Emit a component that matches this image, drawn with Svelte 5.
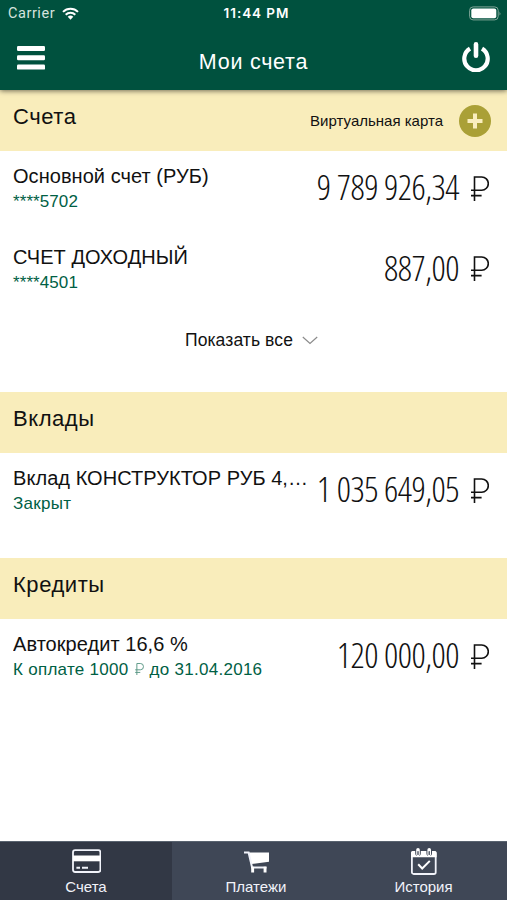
<script lang="ts">
	type Item = {
		title: string;
		note: string;
		due?: string;
		amount: string;
	};

	const accounts: Item[] = [
		{ title: 'Основной счет (РУБ)', note: '****5702', amount: '9 789 926,34' },
		{ title: 'СЧЕТ ДОХОДНЫЙ', note: '****4501', amount: '887,00' }
	];

	const deposits: Item[] = [
		{ title: 'Вклад КОНСТРУКТОР РУБ 4,…', note: 'Закрыт', amount: '1 035 649,05' }
	];

	const credits: Item[] = [
		{ title: 'Автокредит 16,6 %', note: 'К оплате 1000', due: 'до 31.04.2016', amount: '120 000,00' }
	];

	let activeTab = $state('accounts');
</script>

{#snippet ruble()}
	<svg class="ruble" viewBox="0 0 18 25" aria-label="₽">
		<path d="M3.5 25V1h7.2a6.4 6.4 0 0 1 0 13.2H0M0 19.6h10.6" />
	</svg>
{/snippet}

{#snippet row(item: Item)}
	<article class="row">
		<div class="info">
			<h3>{item.title}</h3>
			<p class:number={item.note.startsWith('*')}>
				{item.note}
				{#if item.due}
					{@render ruble()}
					{item.due}
				{/if}
			</p>
		</div>
		<div class="amount">
			<span>{item.amount}</span>
			{@render ruble()}
		</div>
	</article>
{/snippet}

<div class="app">
	<header>
		<div class="status">
			<div class="carrier">
				<span>Carrier</span>
				<svg width="17" height="13" viewBox="0 0 17 13">
					<g fill="none" stroke="#fff" stroke-width="2">
						<path d="M1 4.9a10.6 10.6 0 0 1 15 0" />
						<path d="M3.7 7.8a6.8 6.8 0 0 1 9.6 0" />
					</g>
					<path d="M8.5 12.7 5.7 9.8a4 4 0 0 1 5.6 0z" fill="#fff" />
				</svg>
			</div>
			<time>11:44 PM</time>
			<svg class="battery" width="33" height="15" viewBox="0 0 33 15">
				<rect x=".6" y=".9" width="28.6" height="13" rx="3.5" fill="none" stroke="#7fa598" />
				<rect x="2.3" y="2.6" width="25" height="9.6" rx="2" fill="#fff" />
				<path d="M30.5 5.5q1.8 2 0 4z" fill="#7fa598" />
			</svg>
		</div>
		<div class="toolbar">
			<button type="button" class="menu" aria-label="Меню">
				<svg width="28" height="24" viewBox="0 0 28 24" fill="#fff">
					<rect y="0" width="28" height="5" rx="1.2" />
					<rect y="9.3" width="28" height="5" rx="1.2" />
					<rect y="18.6" width="28" height="5" rx="1.2" />
				</svg>
			</button>
			<h1>Мои счета</h1>
			<button type="button" class="power" aria-label="Выход">
				<svg width="28" height="30" viewBox="0 0 28 30" fill="none" stroke="#fff" stroke-width="4.2">
					<path d="M8 6.6a11.7 11.7 0 1 0 12 0" />
					<path d="M14 2.4v11.3" stroke-linecap="round" stroke-width="4.6" />
				</svg>
			</button>
		</div>
	</header>

	<main>
		<section class="accounts">
			<div class="section-head">
				<h2>Счета</h2>
				<button type="button" class="virtual">
					<span>Виртуальная карта</span>
					<svg width="32" height="32" viewBox="0 0 32 32">
						<circle cx="16" cy="16" r="16" fill="#aaa036" />
						<path d="M16 8.5v15M8.5 16h15" stroke="#faeebd" stroke-width="4" />
					</svg>
				</button>
			</div>
			{#each accounts as item (item.note)}
				{@render row(item)}
			{/each}
			<button type="button" class="show-all">
				<span>Показать все</span>
				<svg width="16" height="9" viewBox="0 0 16 9">
					<path d="M.8 1 8 7.4 15.2 1" fill="none" stroke="#8b8b8b" stroke-width="1.2" />
				</svg>
			</button>
		</section>

		<section class="deposits">
			<div class="section-head"><h2>Вклады</h2></div>
			{#each deposits as item (item.title)}
				{@render row(item)}
			{/each}
		</section>

		<section>
			<div class="section-head"><h2>Кредиты</h2></div>
			{#each credits as item (item.title)}
				{@render row(item)}
			{/each}
		</section>
	</main>

	<nav>
		<button type="button" class:active={activeTab === 'accounts'} onclick={() => (activeTab = 'accounts')}>
			<svg width="30" height="26" viewBox="0 0 30 26">
				<rect x="2" y="2.2" width="27.4" height="21.8" rx="2.2" fill="none" stroke="#f1f3fa" stroke-width="1.8" />
				<path d="M2 7.5h27.4v5.8H2z" fill="#fff" />
				<path d="M5.4 19.8H9M11 19.8h6" stroke="#f1f3fa" stroke-width="2" />
			</svg>
			<span>Счета</span>
		</button>
		<button type="button" class:active={activeTab === 'payments'} onclick={() => (activeTab = 'payments')}>
			<svg width="28" height="26" viewBox="0 0 28 26">
				<path d="M7 4.6h20v9.2L9.4 16z" fill="#fff" />
				<path d="M2 4.4h4.6l3.5 15h14.4" fill="none" stroke="#f1f3fa" stroke-width="2" />
				<path d="M9.2 18.8h2.9v5.7H9.2zM21.6 18.8h2.9v5.7h-2.9z" fill="#fff" />
			</svg>
			<span>Платежи</span>
		</button>
		<button type="button" class:active={activeTab === 'history'} onclick={() => (activeTab = 'history')}>
			<svg width="26" height="28" viewBox="0 0 26 28">
				<rect x=".9" y="4" width="23.8" height="22" rx="1.8" fill="none" stroke="#f1f3fa" stroke-width="1.8" />
				<path d="M1.8 3h22q1.8 0 1.8 1.8v4.4H0V4.8Q0 3 1.8 3z" fill="#fff" />
				<g stroke-linecap="round">
					<path d="M7 2.2v3M18.2 2.2v3" stroke="#3f4756" stroke-width="5.6" />
					<path d="M7 1.8v4.6M18.2 1.8v4.6" stroke="#fff" stroke-width="3.6" />
					<path d="M7 3.6v2.8M18.2 3.6v2.8" stroke="#3f4756" stroke-width="1.3" />
				</g>
				<path d="m7.2 16.3 4 4.2 7.6-7.6" fill="none" stroke="#fff" stroke-width="2" />
			</svg>
			<span>История</span>
		</button>
	</nav>
</div>

<style>
	:global(body) {
		margin: 0;
	}

	.app {
		display: flex;
		flex-direction: column;
		height: 900px;
		overflow: hidden;
		background: #fff;
		color: #111;
		font-family: 'Liberation Sans', Arial, sans-serif;
	}

	h1,
	h2,
	h3,
	p {
		margin: 0;
		font-weight: 400;
	}

	button {
		padding: 0;
		border: 0;
		background: none;
		color: inherit;
		font: inherit;
		cursor: pointer;
	}

	svg {
		display: block;
		flex: none;
	}

	header {
		position: relative;
		height: 90px;
		background: #00513e;
		color: #fff;
		box-shadow: 0 1px 5px rgba(0, 0, 0, 0.55);
	}

	.status {
		display: grid;
		grid-template-columns: 1fr auto 1fr;
		align-items: center;
		height: 27px;
		padding: 0 5px 0 8px;
	}

	.carrier {
		display: flex;
		align-items: center;
		gap: 7px;
		font: 14.5px/27px Roboto, sans-serif;
		letter-spacing: 0.55px;
		color: #d5e3de;
	}

	.status time {
		padding-left: 3px;
		font: 600 13.5px/27px Inter, sans-serif;
		letter-spacing: 0.95px;
	}

	.battery {
		justify-self: end;
	}

	.toolbar {
		display: grid;
		grid-template-columns: 28px 1fr 28px;
		align-items: center;
		height: 63px;
		padding: 0 17px;
	}

	.toolbar button {
		align-self: start;
	}

	.toolbar .menu {
		padding-top: 19px;
	}

	.toolbar .power {
		padding-top: 15px;
	}

	.toolbar h1 {
		padding-top: 8px;
		font-size: 21.5px;
		letter-spacing: 0.75px;
		text-align: center;
	}

	.section-head {
		display: flex;
		justify-content: space-between;
		height: 61px;
		box-sizing: border-box;
		padding: 0 16px 0 13px;
		background: #f9edbb;
	}

	h2 {
		font-size: 22px;
		line-height: 54px;
		letter-spacing: 0.55px;
	}

	.virtual {
		display: flex;
		align-items: center;
		gap: 16px;
		font-size: 15px;
	}

	.row {
		display: flex;
		justify-content: space-between;
		height: 80.5px;
		padding: 0 18px 0 13px;
	}

	.info {
		flex: 1;
		min-width: 0;
		padding-top: 12px;
	}

	h3 {
		overflow: hidden;
		font-size: 20px;
		line-height: 26px;
		letter-spacing: 0.05px;
		text-overflow: ellipsis;
		white-space: nowrap;
	}

	p {
		font-size: 17px;
		line-height: 25px;
		letter-spacing: 0.28px;
		color: #006044;
		white-space: nowrap;
	}

	p.number {
		letter-spacing: 0.08px;
	}

	p .ruble {
		display: inline-block;
		width: 9px;
		height: 12px;
		margin: 0 1px;
		stroke-width: 2;
		opacity: 0.65;
	}

	.ruble {
		width: 18px;
		height: 25px;
		fill: none;
		stroke: currentColor;
		stroke-width: 1.6;
	}

	.amount {
		display: flex;
		align-items: center;
		gap: 12px;
		height: 74px;
		padding-left: 2px;
		font-family: 'Open Sans', sans-serif;
		font-size: 35px;
		font-stretch: 75%;
		font-weight: 300;
		letter-spacing: -0.5px;
		white-space: nowrap;
	}

	.amount span {
		margin-top: -3px;
	}

	.show-all {
		display: flex;
		align-items: center;
		justify-content: center;
		gap: 9px;
		width: 100%;
		height: 56px;
		padding-right: 4px;
		font-size: 17.5px;
		letter-spacing: 0.1px;
	}

	.accounts {
		height: 302px;
	}

	.deposits {
		height: 166px;
	}

	main {
		flex: 1;
	}

	nav {
		display: grid;
		grid-template-columns: 172px 168px 1fr;
		height: 59px;
		background: #3f4756;
		color: #f1f3fa;
	}

	nav button {
		display: flex;
		flex-direction: column;
		align-items: center;
		justify-content: space-between;
		height: 59px;
		box-sizing: border-box;
		padding: 6px 0 4px;
		border-top: 1px solid #59636f;
		font-size: 15px;
		line-height: 18px;
	}

	nav button.active {
		background: #323845;
	}
</style>
